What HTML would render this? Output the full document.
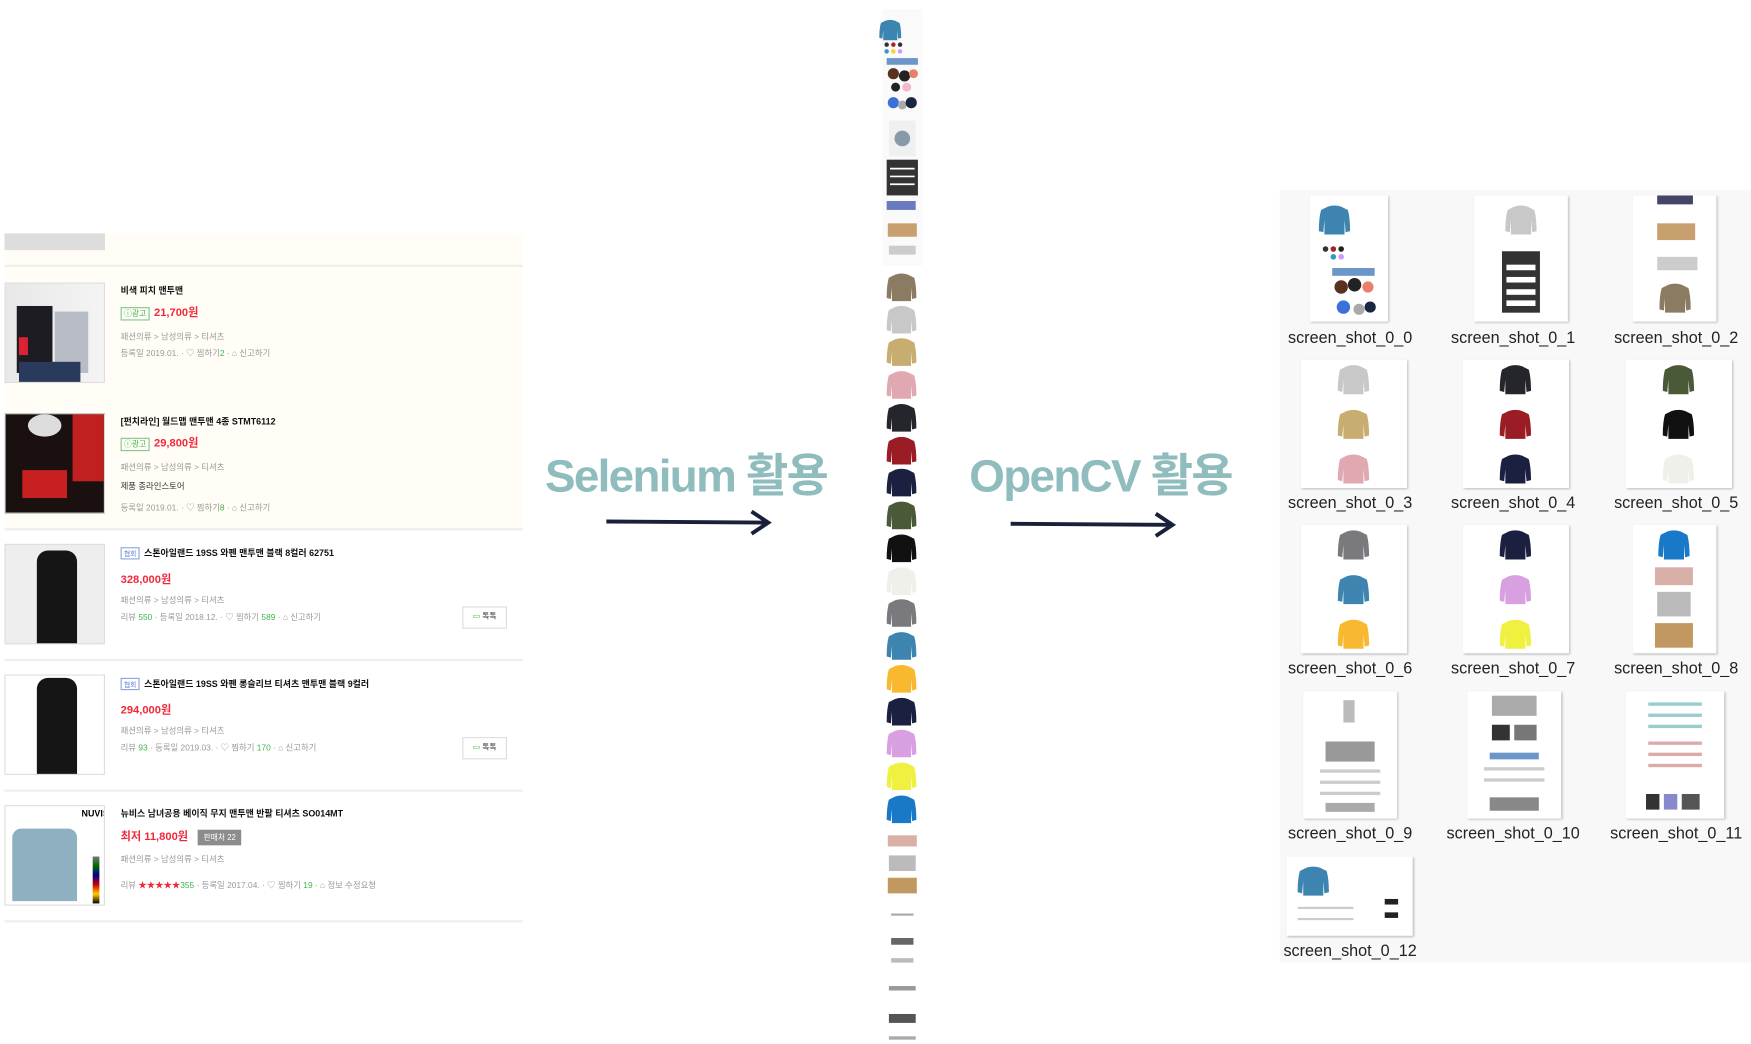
<!DOCTYPE html>
<html><head><meta charset="utf-8"><style>
html,body{margin:0;padding:0;background:#fff;overflow:hidden}
body{width:1751px;height:1044px;position:relative}
#w{position:absolute;left:0;top:0;width:1568px;height:935px;transform:scale(1.11671);transform-origin:0 0;font-family:"Liberation Sans","Noto Sans CJK KR",sans-serif}
.a{position:absolute}
.it{position:absolute;left:4px;width:464px;height:117px;border-bottom:2px solid #eeeeee}
.th{position:absolute;left:0;top:14px;width:90px;height:90px;border:1px solid #ddd;box-sizing:border-box;overflow:hidden}
.t{position:absolute;left:104px;font-size:8px;font-weight:bold;color:#111;white-space:nowrap}
.p{position:absolute;left:104px;font-size:10px;font-weight:bold;color:#f0283c;white-space:nowrap}
.g{position:absolute;left:104px;font-size:7.5px;color:#999;white-space:nowrap}
.gr{color:#3cb44b}
.ad{display:inline-block;border:1px solid #7cc98a;color:#3cb44b;font-size:7px;padding:0 2px;margin-right:4px;font-weight:normal}
.tag{display:inline-block;border:1px solid #8aa4e0;color:#5a7ad0;font-size:6px;padding:0 2px;margin-right:4px;font-weight:normal}
.tk{position:absolute;right:14px;width:38px;height:18px;border:1px solid #ddd;font-size:7px;color:#333;text-align:center;line-height:18px;background:#fff}
.big{position:absolute;font-size:41px;font-weight:bold;color:#8fbcbc;letter-spacing:-1.5px;white-space:nowrap}
.lab{position:absolute;width:146px;text-align:center;font-size:14.5px;color:#222}
.card{position:absolute;background:#fff;box-shadow:1px 1px 2px #bbb;overflow:hidden}
</style></head><body><div id="w">
<svg width="0" height="0" style="position:absolute"><defs><path id="sw" d="M8 2 Q14 0 20 2 L26 5 Q28 12 28 24 L24 25 L23 14 L23 27 L5 27 L5 14 L4 25 L0 24 Q0 12 2 5 Z"/></defs></svg>

<div class="a" style="left:4px;top:209px;width:464px;height:28px;background:#fffdf6;border-bottom:2px solid #eee"></div>
<div class="a" style="left:4px;top:209px;width:90px;height:15px;background:#ddd"></div>

<div class="it" style="top:239px;background:#fffdf6">
 <div class="th" style="background:linear-gradient(90deg,#e8e8e8,#f4f4f4)"><div class="a" style="left:10px;top:20px;width:32px;height:60px;background:#1c1c22"></div><div class="a" style="left:12px;top:48px;width:8px;height:16px;background:#d23"></div><div class="a" style="left:44px;top:25px;width:30px;height:55px;background:#b8bcc4"></div><div class="a" style="left:12px;top:70px;width:55px;height:20px;background:#2a3a5c"></div></div>
 <div class="t" style="top:16px">비색 피치 맨투맨</div>
 <div class="p" style="top:32px"><span class="ad">ⓘ광고</span>21,700원</div>
 <div class="g" style="top:57px">패션의류 &gt; 남성의류 &gt; 티셔츠</div>
 <div class="g" style="top:72px">등록일 2019.01. · ♡ 찜하기<span class="gr">2</span> · ⌂ 신고하기</div>
</div>
<div class="it" style="top:356px;background:#fffdf6">
 <div class="th" style="background:#1a1010"><div class="a" style="left:60px;top:0;width:30px;height:60px;background:#c02020"></div><div class="a" style="left:15px;top:50px;width:40px;height:25px;background:#c82020"></div><div class="a" style="left:20px;top:0;width:30px;height:20px;background:#ddd;border-radius:50%"></div></div>
 <div class="t" style="top:16px">[펀치라인] 월드맵 맨투맨 4종 STMT6112</div>
 <div class="p" style="top:32px"><span class="ad">ⓘ광고</span>29,800원</div>
 <div class="g" style="top:57px">패션의류 &gt; 남성의류 &gt; 티셔츠</div>
 <div class="t" style="top:74px;font-weight:normal;font-size:7.5px;color:#333">제품 종라인스토어</div>
 <div class="g" style="top:93px">등록일 2019.01. · ♡ 찜하기<span class="gr">8</span> · ⌂ 신고하기</div>
</div>
<div class="it" style="top:473px">
 <div class="th" style="background:#eee"><div class="a" style="left:28px;top:5px;width:36px;height:85px;background:#151515;border-radius:10px 10px 0 0"></div></div>
 <div class="t" style="top:17px"><span class="tag">협회</span>스톤아일랜드 19SS 와펜 맨투맨 블랙 8컬러 62751</div>
 <div class="p" style="top:37px">328,000원</div>
 <div class="g" style="top:59px">패션의류 &gt; 남성의류 &gt; 티셔츠</div>
 <div class="g" style="top:74px">리뷰 <span class="gr">550</span> · 등록일 2018.12. · ♡ 찜하기 <span class="gr">589</span> · ⌂ 신고하기</div>
 <div class="tk" style="top:70px"><span class="gr">▭</span> 톡톡</div>
</div>
<div class="it" style="top:590px">
 <div class="th" style="background:#fff"><div class="a" style="left:28px;top:2px;width:36px;height:88px;background:#151515;border-radius:10px 10px 0 0"></div></div>
 <div class="t" style="top:17px"><span class="tag">협회</span>스톤아일랜드 19SS 와펜 롱슬리브 티셔츠 맨투맨 블랙 9컬러</div>
 <div class="p" style="top:37px">294,000원</div>
 <div class="g" style="top:59px">패션의류 &gt; 남성의류 &gt; 티셔츠</div>
 <div class="g" style="top:74px">리뷰 <span class="gr">93</span> · 등록일 2019.03. · ♡ 찜하기 <span class="gr">170</span> · ⌂ 신고하기</div>
 <div class="tk" style="top:70px"><span class="gr">▭</span> 톡톡</div>
</div>
<div class="it" style="top:707px">
 <div class="th" style="background:#fff"><div class="a" style="left:6px;top:20px;width:58px;height:65px;background:#8fb0c0;border-radius:8px 8px 0 0"></div><div class="a" style="left:68px;top:2px;font-size:8px;font-weight:bold">NUVIS</div><div class="a" style="left:78px;top:45px;width:6px;height:42px;background:linear-gradient(#777,#060,#008,#c00,#fc0,#000)"></div></div>
 <div class="t" style="top:16px">뉴비스 남녀공용 베이직 무지 맨투맨 반팔 티셔츠 SO014MT</div>
 <div class="p" style="top:33px">최저 11,800원 <span style="display:inline-block;background:#8c8c8c;color:#fff;font-size:7px;padding:2px 5px;margin-left:6px;font-weight:normal">판매처 22</span></div>
 <div class="g" style="top:57px">패션의류 &gt; 남성의류 &gt; 티셔츠</div>
 <div class="g" style="top:80px">리뷰 <span style="color:#f0283c">★★★★★</span><span class="gr">355</span> · 등록일 2017.04. · ♡ 찜하기 <span class="gr">19</span> · ⌂ 정보 수정요청</div>
</div>

<div class="big" style="left:488px;top:392px">Selenium 활용</div>
<div class="big" style="left:868px;top:392px">OpenCV 활용</div>
<svg class="a" style="left:540px;top:455px" width="155" height="26"><line x1="3" y1="12" x2="146" y2="13" stroke="#1a1f3a" stroke-width="3.5"/><path d="M133 3 L148 13 L133 23" fill="none" stroke="#1a1f3a" stroke-width="3.5"/></svg>
<svg class="a" style="left:902px;top:457px" width="155" height="26"><line x1="3" y1="12" x2="146" y2="13" stroke="#1a1f3a" stroke-width="3.5"/><path d="M133 3 L148 13 L133 23" fill="none" stroke="#1a1f3a" stroke-width="3.5"/></svg>

<svg class="a" style="left:786px;top:8px" width="44" height="930">
 <rect x="4" y="0" width="36" height="230" fill="#fafafa"/>
 <use href="#sw" x="2" y="8" fill="#3d85b0" transform="scale(0.7) translate(0,5)"/>
 <g fill="#333"><circle cx="8" cy="32" r="2"/><circle cx="14" cy="32" r="2" fill="#a22"/><circle cx="20" cy="32" r="2"/><circle cx="8" cy="38" r="2" fill="#39c"/><circle cx="14" cy="38" r="2" fill="#fc3"/><circle cx="20" cy="38" r="2" fill="#c9f"/></g>
 <rect x="8" y="44" width="28" height="6" fill="#6c96c8"/>
 <circle cx="14" cy="58" r="5" fill="#5a3020"/><circle cx="24" cy="60" r="5" fill="#222"/><circle cx="32" cy="58" r="4" fill="#e9806a"/>
 <circle cx="16" cy="70" r="4" fill="#222"/><circle cx="26" cy="70" r="4" fill="#f4b8c8"/>
 <circle cx="14" cy="84" r="5" fill="#3a70d8"/><circle cx="22" cy="86" r="4" fill="#aaa"/><circle cx="30" cy="84" r="5" fill="#1a2540"/>
 <rect x="10" y="100" width="24" height="32" fill="#f0f0f0"/><circle cx="22" cy="116" r="7" fill="#8899aa"/>
 <rect x="8" y="135" width="28" height="32" fill="#333"/><g stroke="#fff" stroke-width="1.5"><line x1="11" y1="143" x2="33" y2="143"/><line x1="11" y1="150" x2="33" y2="150"/><line x1="11" y1="157" x2="33" y2="157"/></g>
 <rect x="8" y="172" width="26" height="8" fill="#6a7ac0"/>
 <rect x="9" y="192" width="26" height="12" fill="#c8a070"/>
 <rect x="10" y="212" width="24" height="8" fill="#ccc"/>
 <g transform="translate(8,236) scale(0.95)">
  <use href="#sw" y="0" fill="#8b7b62"/><use href="#sw" y="30.5" fill="#c8c8c8"/><use href="#sw" y="61" fill="#c8ad70"/><use href="#sw" y="92" fill="#e0a8b0"/><use href="#sw" y="123" fill="#25262c"/><use href="#sw" y="154" fill="#9a1c24"/><use href="#sw" y="184" fill="#1c2040"/><use href="#sw" y="215" fill="#4a5a38"/><use href="#sw" y="246" fill="#111"/><use href="#sw" y="277" fill="#f0f0ea"/><use href="#sw" y="307" fill="#7a7a7e"/><use href="#sw" y="338" fill="#3d85b0"/><use href="#sw" y="369" fill="#f8b830"/><use href="#sw" y="400" fill="#1c2040"/><use href="#sw" y="430" fill="#d8a0e0"/><use href="#sw" y="461" fill="#f0f040"/><use href="#sw" y="492" fill="#1a78c8"/>
 </g>
 <rect x="9" y="740" width="26" height="10" fill="#d8b0a8"/><rect x="10" y="758" width="24" height="14" fill="#bbb"/><rect x="9" y="778" width="26" height="14" fill="#c09860"/>
 <rect x="12" y="810" width="20" height="2" fill="#aaa"/><rect x="12" y="832" width="20" height="6" fill="#666"/><rect x="12" y="850" width="20" height="4" fill="#bbb"/><rect x="10" y="875" width="24" height="4" fill="#999"/><rect x="10" y="900" width="24" height="8" fill="#555"/><rect x="10" y="920" width="24" height="3" fill="#aaa"/>
</svg>

<div class="a" style="left:1146px;top:170px;width:422px;height:692px;background:#f8f8f8"></div>
<div class="card" style="left:1173px;top:175px;width:70px;height:113px"><svg width="70" height="113"><use href="#sw" x="8" y="8" fill="#3d85b0"/><g><circle cx="14" cy="48" r="2.5" fill="#333"/><circle cx="21" cy="48" r="2.5" fill="#a22"/><circle cx="28" cy="48" r="2.5" fill="#222"/><circle cx="21" cy="55" r="2.5" fill="#39c"/><circle cx="28" cy="55" r="2.5" fill="#c9f"/></g><rect x="20" y="65" width="38" height="7" fill="#6c96c8"/><circle cx="28" cy="82" r="6" fill="#5a3020"/><circle cx="40" cy="80" r="6" fill="#222"/><circle cx="52" cy="82" r="5" fill="#e9806a"/><circle cx="30" cy="100" r="6" fill="#3a70d8"/><circle cx="44" cy="102" r="5" fill="#aaa"/><circle cx="54" cy="100" r="5" fill="#1a2540"/></svg></div>
<div class="card" style="left:1320px;top:175px;width:84px;height:113px"><svg width="84" height="113"><use href="#sw" x="28" y="8" fill="#c8c8c8"/><rect x="25" y="50" width="34" height="55" fill="#333"/><g fill="#fff"><rect x="29" y="62" width="26" height="5"/><rect x="29" y="73" width="26" height="5"/><rect x="29" y="84" width="26" height="5"/><rect x="29" y="94" width="26" height="5"/></g></svg></div>
<div class="card" style="left:1462px;top:175px;width:75px;height:113px"><svg width="75" height="113"><rect x="22" y="0" width="32" height="8" fill="#446"/><rect x="22" y="25" width="34" height="15" fill="#c8a070"/><rect x="22" y="55" width="36" height="12" fill="#ccc"/><use href="#sw" x="24" y="78" fill="#8b7b62"/></svg></div>

<div class="lab" style="left:1136px;top:295px">screen_shot_0_0</div>
<div class="lab" style="left:1282px;top:295px">screen_shot_0_1</div>
<div class="lab" style="left:1428px;top:295px">screen_shot_0_2</div>

<div class="card" style="left:1165px;top:322px;width:95px;height:115px"><svg width="95" height="115"><use href="#sw" x="33" y="4" fill="#c8c8c8"/><use href="#sw" x="33" y="44" fill="#c8ad70"/><use href="#sw" x="33" y="84" fill="#e0a8b0"/></svg></div>
<div class="card" style="left:1310px;top:322px;width:95px;height:115px"><svg width="95" height="115"><use href="#sw" x="33" y="4" fill="#25262c"/><use href="#sw" x="33" y="44" fill="#9a1c24"/><use href="#sw" x="33" y="84" fill="#1c2040"/></svg></div>
<div class="card" style="left:1456px;top:322px;width:95px;height:115px"><svg width="95" height="115"><use href="#sw" x="33" y="4" fill="#4a5a38"/><use href="#sw" x="33" y="44" fill="#111"/><use href="#sw" x="33" y="84" fill="#f0f0ea"/></svg></div>
<div class="lab" style="left:1136px;top:443px">screen_shot_0_3</div>
<div class="lab" style="left:1282px;top:443px">screen_shot_0_4</div>
<div class="lab" style="left:1428px;top:443px">screen_shot_0_5</div>

<div class="card" style="left:1165px;top:470px;width:95px;height:115px"><svg width="95" height="115"><use href="#sw" x="33" y="4" fill="#7a7a7e"/><use href="#sw" x="33" y="44" fill="#3d85b0"/><use href="#sw" x="33" y="84" fill="#f8b830"/></svg></div>
<div class="card" style="left:1310px;top:470px;width:95px;height:115px"><svg width="95" height="115"><use href="#sw" x="33" y="4" fill="#1c2040"/><use href="#sw" x="33" y="44" fill="#d8a0e0"/><use href="#sw" x="33" y="84" fill="#f0f040"/></svg></div>
<div class="card" style="left:1462px;top:470px;width:75px;height:115px"><svg width="75" height="115"><use href="#sw" x="23" y="4" fill="#1a78c8"/><rect x="20" y="38" width="34" height="16" fill="#d8b0a8"/><rect x="22" y="60" width="30" height="22" fill="#bbb"/><rect x="20" y="88" width="34" height="22" fill="#c09860"/></svg></div>
<div class="lab" style="left:1136px;top:591px">screen_shot_0_6</div>
<div class="lab" style="left:1282px;top:591px">screen_shot_0_7</div>
<div class="lab" style="left:1428px;top:591px">screen_shot_0_8</div>

<div class="card" style="left:1167px;top:619px;width:84px;height:114px"><svg width="84" height="114"><rect x="36" y="8" width="10" height="20" fill="#bbb"/><rect x="20" y="45" width="44" height="18" fill="#999"/><g fill="#ccc"><rect x="15" y="70" width="54" height="3"/><rect x="15" y="80" width="54" height="3"/><rect x="15" y="90" width="54" height="3"/></g><rect x="20" y="100" width="44" height="8" fill="#aaa"/></svg></div>
<div class="card" style="left:1314px;top:619px;width:84px;height:114px"><svg width="84" height="114"><rect x="22" y="4" width="40" height="18" fill="#aaa"/><rect x="22" y="30" width="16" height="14" fill="#333"/><rect x="42" y="30" width="20" height="14" fill="#777"/><rect x="20" y="55" width="44" height="6" fill="#6c96c8"/><g fill="#ccc"><rect x="15" y="68" width="54" height="3"/><rect x="15" y="78" width="54" height="3"/></g><rect x="20" y="95" width="44" height="12" fill="#888"/></svg></div>
<div class="card" style="left:1456px;top:619px;width:88px;height:114px"><svg width="88" height="114"><g fill="#9cc"><rect x="20" y="10" width="48" height="3"/><rect x="20" y="20" width="48" height="3"/><rect x="20" y="30" width="48" height="3"/></g><g fill="#daa"><rect x="20" y="45" width="48" height="3"/><rect x="20" y="55" width="48" height="3"/><rect x="20" y="65" width="48" height="3"/></g><rect x="18" y="92" width="12" height="14" fill="#333"/><rect x="34" y="92" width="12" height="14" fill="#88c"/><rect x="50" y="92" width="16" height="14" fill="#555"/></svg></div>
<div class="lab" style="left:1136px;top:739px">screen_shot_0_9</div>
<div class="lab" style="left:1282px;top:739px">screen_shot_0_10</div>
<div class="lab" style="left:1428px;top:739px">screen_shot_0_11</div>

<div class="card" style="left:1152px;top:767px;width:113px;height:71px"><svg width="113" height="71"><use href="#sw" x="10" y="8" fill="#3d85b0"/><rect x="88" y="38" width="12" height="5" fill="#222"/><rect x="88" y="50" width="12" height="5" fill="#222"/><g fill="#ccc"><rect x="10" y="45" width="50" height="2"/><rect x="10" y="55" width="50" height="2"/></g></svg></div>
<div class="lab" style="left:1136px;top:844px">screen_shot_0_12</div>
</div></body></html>
